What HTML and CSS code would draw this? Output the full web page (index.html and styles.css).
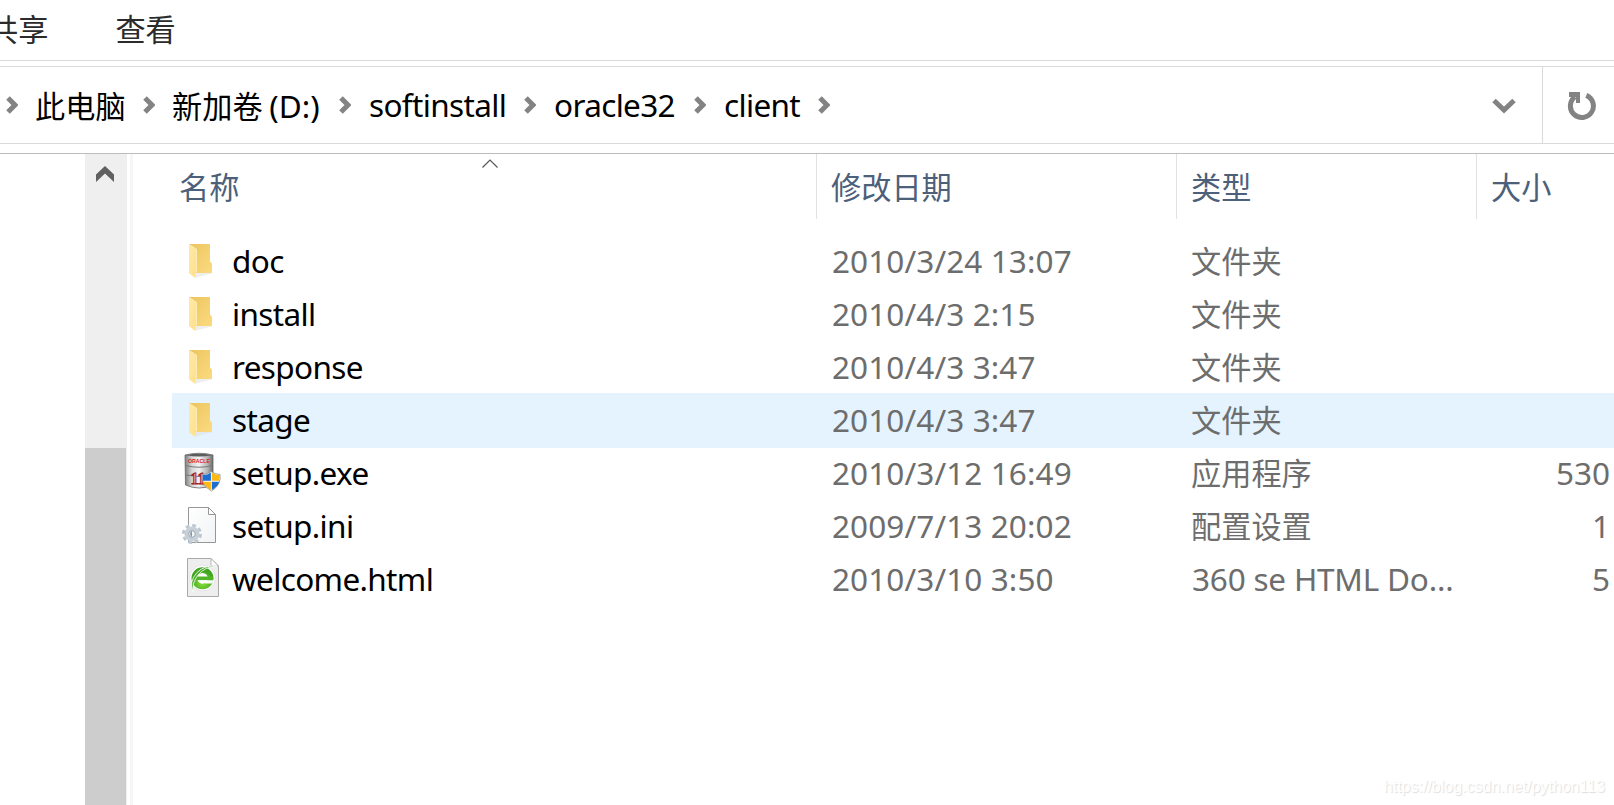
FILE: index.html
```html
<!DOCTYPE html>
<html lang="zh-CN">
  <head>
    <meta charset="UTF-8" />
    <meta name="viewport" content="width=device-width, initial-scale=1.0" />
    <title>client</title>
    <link rel="stylesheet" href="styles.css">
  </head>
  <body>
    <svg class="defs" width="0" height="0">
      <defs>
        <linearGradient id="folderBack" x1="0" y1="0" x2="1" y2="1">
          <stop offset="0" stop-color="#ecc45e" />
          <stop offset="1" stop-color="#fbdb80" />
        </linearGradient>
        <linearGradient id="folderFront" x1="0" y1="0" x2="1" y2="1">
          <stop offset="0" stop-color="#ffe9a6" />
          <stop offset="1" stop-color="#fee08b" />
        </linearGradient>
        <linearGradient id="metal" x1="0" y1="0" x2="1" y2="0">
          <stop offset="0" stop-color="#7d7d7d" />
          <stop offset="0.25" stop-color="#d6d6d6" />
          <stop offset="0.5" stop-color="#f2f2f2" />
          <stop offset="0.8" stop-color="#b4b4b4" />
          <stop offset="1" stop-color="#6a6a6a" />
        </linearGradient>
        <linearGradient id="paper" x1="0" y1="0" x2="1" y2="1">
          <stop offset="0" stop-color="#ffffff" />
          <stop offset="1" stop-color="#f1f3f5" />
        </linearGradient>
        <radialGradient id="green" cx="0.5" cy="0.75" r="0.7">
          <stop offset="0" stop-color="#8be23a" />
          <stop offset="1" stop-color="#3fa522" />
        </radialGradient>
      </defs>
      <symbol id="chevron" viewBox="0 0 12 18">
        <path d="M2 2 L9 9 L2 16" fill="none" stroke="#838383" stroke-width="5" />
      </symbol>
      <symbol id="folder" viewBox="0 0 44 53">
        <path d="M16 42.5 L33 38 H16z" fill="#ddd" opacity="0.5" />
        <path d="M9 9 H30 V26.5 L32 28.8 V38 H14z" fill="url(#folderBack)" />
        <path d="M9 9.2 L16.8 14.5 V37 L15.7 38.5 V43.2 L9 38.3z" fill="url(#folderFront)" />
        <path d="M9.5 9.5 L16.5 14.3 V37" fill="none" stroke="#fff0c0" stroke-width="0.8" />
      </symbol>
    </svg>

    <div class="tabs">
      <span class="tab tab-share">共享</span>
      <span class="tab">查看</span>
    </div>

    <div class="address">
      <div class="crumbs">
        <svg class="sep"><use href="#chevron" /></svg>
        <span class="zh">此电脑</span>
        <svg class="sep"><use href="#chevron" /></svg>
        <span class="zh">新加卷 <span class="drive">(D:)</span></span>
        <svg class="sep"><use href="#chevron" /></svg>
        <span class="name">softinstall</span>
        <svg class="sep"><use href="#chevron" /></svg>
        <span class="name">oracle32</span>
        <svg class="sep"><use href="#chevron" /></svg>
        <span class="name">client</span>
        <svg class="sep"><use href="#chevron" /></svg>
      </div>
      <svg class="dropdown" width="24" height="16" viewBox="0 0 24 16">
        <path d="M2 2.5 L12 12 L22 2.5" fill="none" stroke="#838383" stroke-width="5" />
      </svg>
      <div class="refresh">
        <svg width="30" height="30" viewBox="0 0 30 30">
          <path d="M19.3 4.4 A11.5 11.5 0 1 1 8 5.8" fill="none" stroke="#838383" stroke-width="5" />
          <path d="M2 1 H13 V12 H9 V6 H2z" fill="#838383" />
        </svg>
      </div>
    </div>

    <div class="main">
      <div class="tree"></div>
      <div class="scrollbar">
        <svg width="18" height="16" viewBox="0 0 18 16">
          <path d="M9 0 L18 8.5 V16 L9 7.5 L0 16 V8.5z" fill="#606060" />
        </svg>
        <div class="thumb"></div>
      </div>
      <div class="splitter"></div>
      <div class="files">
        <div class="header">
          <div class="col col-name">
            名称
            <svg class="sort" width="16" height="9" viewBox="0 0 16 9">
              <path d="M0.5 8.5 L8 1 L15.5 8.5" fill="none" stroke="#555" stroke-width="1.2" />
            </svg>
          </div>
          <div class="col">修改日期</div>
          <div class="col">类型</div>
          <div class="col">大小</div>
        </div>
        <div class="rows">
          <div class="row">
            <svg class="icon"><use href="#folder" /></svg>
            <span class="name">doc</span>
            <span class="date">2010/3/24 13:07</span>
            <span class="type">文件夹</span>
            <span class="size"></span>
          </div>
          <div class="row">
            <svg class="icon"><use href="#folder" /></svg>
            <span class="name">install</span>
            <span class="date">2010/4/3 2:15</span>
            <span class="type">文件夹</span>
            <span class="size"></span>
          </div>
          <div class="row">
            <svg class="icon"><use href="#folder" /></svg>
            <span class="name">response</span>
            <span class="date">2010/4/3 3:47</span>
            <span class="type">文件夹</span>
            <span class="size"></span>
          </div>
          <div class="row active">
            <svg class="icon"><use href="#folder" /></svg>
            <span class="name">stage</span>
            <span class="date">2010/4/3 3:47</span>
            <span class="type">文件夹</span>
            <span class="size"></span>
          </div>
          <div class="row">
            <svg class="icon" viewBox="0 0 44 53">
              <path d="M5 8 Q19 4.5 33 8 V38 Q19 44 5.5 38z" fill="url(#metal)" stroke="#666" stroke-width="0.8" />
              <path d="M6 8.2 Q19 5.5 32 8.2 Q19 11 6 8.2z" fill="#5c5c5c" />
              <path d="M5.5 18.5 Q19 22 32.5 18.5 M5.5 28 Q19 31 32.5 28" fill="none" stroke="#777" />
              <text x="8" y="15.8" textLength="22" lengthAdjust="spacingAndGlyphs" class="oracle">ORACLE</text>
              <text x="10.5" y="37" class="eleven">11</text>
              <path d="M22 27.5 Q28 27 31 24.5 Q35 27.5 40 27.5 Q41.5 38 31.5 44 Q21 38 22 27.5z" fill="#fff" stroke="#888" stroke-width="0.8" />
              <path d="M22.6 28.1 Q27.5 28 30.9 25.5 V33.8 H22.8z" fill="#1c6fd2" />
              <path d="M31.8 25.5 Q35.5 28.1 39.7 28.1 L39.4 33.8 H31.8z" fill="#fdb813" />
              <path d="M23 34.7 H30.9 V43 Q24.8 39.5 23 34.7z" fill="#fdb813" />
              <path d="M31.8 34.7 H39.2 Q38 39.5 31.8 43z" fill="#1c6fd2" />
            </svg>
            <span class="name">setup.exe</span>
            <span class="date">2010/3/12 16:49</span>
            <span class="type">应用程序</span>
            <span class="size">530</span>
          </div>
          <div class="row">
            <svg class="icon" viewBox="0 0 44 53">
              <path d="M8.5 7.5 H28.5 L35.5 14.5 V42.5 H8.5z" fill="url(#paper)" stroke="#979797" />
              <path d="M28.5 7.5 V14.5 H35.5z" fill="#fff" stroke="#979797" />
              <circle cx="12" cy="34" r="8.3" fill="none" stroke="#bcc7d0" stroke-width="3.4" stroke-dasharray="3.6 2.92" />
              <circle cx="12" cy="34" r="5.3" fill="none" stroke="#c7d0d8" stroke-width="4.5" />
              <circle cx="12" cy="34" r="3.3" fill="#f4f6f8" stroke="#95a0aa" stroke-width="0.9" />
              <path d="M12 30.8 Q8 34 12 37.2z" fill="#8d98a2" />
            </svg>
            <span class="name">setup.ini</span>
            <span class="date">2009/7/13 20:02</span>
            <span class="type">配置设置</span>
            <span class="size">1</span>
          </div>
          <div class="row">
            <svg class="icon" viewBox="0 0 44 53">
              <path d="M7.5 5.5 H31 L38.5 13 V43.5 H7.5z" fill="#eeeeee" stroke="#a9a9a9" />
              <path d="M31 5.5 V13 H38.5z" fill="#fff" stroke="#b5b5b5" />
              <circle cx="22.5" cy="25" r="13" fill="#fbfbfb" stroke="#dcdcdc" stroke-width="0.7" />
              <circle cx="22.5" cy="25.3" r="8.2" fill="#fff" stroke="url(#green)" stroke-width="5.6" />
              <path d="M16 25.3 H33" stroke="#50b529" stroke-width="3.6" />
              <path d="M25.5 27.3 H34 L32 30.5 H25z" fill="#fbfbfb" />
              <path d="M13 39 Q8.5 29 17 19.5 Q25 11.500 37 13.2 Q25 13.5 18 22 Q12 29.5 13 39z" fill="#4caf2b" stroke="#fff" stroke-width="0.8" />
            </svg>
            <span class="name">welcome.html</span>
            <span class="date">2010/3/10 3:50</span>
            <span class="type latin">360 se HTML Do...</span>
            <span class="size">5</span>
          </div>
        </div>
      </div>
    </div>
    <div class="watermark">https://blog.csdn.net/python113</div>
  </body>
</html>
```
FILE: styles.css
```css
* {
  box-sizing: border-box;
}
body {
  margin: 0;
  height: 805px;
  overflow: hidden;
  display: flex;
  flex-direction: column;
  background: #fff;
  color: #000;
  font-family: "Noto Sans", "Noto Sans CJK SC", sans-serif;
  font-size: 31.5px;
  white-space: nowrap;
}
svg {
  display: block;
}
.defs {
  position: absolute;
}
.zh,
.tab,
.col,
.type {
  font-family: "Noto Sans CJK SC", sans-serif;
  font-size: 30.2px;
}
.name {
  letter-spacing: -0.65px;
}
.drive {
  font-family: "Noto Sans", sans-serif;
  font-size: 31.5px;
}

/* ribbon tabs */
.tabs {
  flex: none;
  display: flex;
  gap: 67px;
  height: 61px;
  border-bottom: 1px solid #dadada;
  color: #2b2b2b;
  line-height: 56px;
}
.tab-share {
  margin-left: -12px;
}

/* address bar */
.address {
  flex: none;
  display: flex;
  align-items: center;
  height: 78px;
  margin-top: 5px;
  border-top: 1px solid #dadada;
  border-bottom: 1px solid #dadada;
}
.crumbs {
  flex: 1;
  display: grid;
  grid-template-columns: 29px 108px 29px 167px 30px 155px 30px 140px 30px 94px 31px;
  align-items: center;
  height: 76px;
  padding-left: 6px;
  line-height: 74px;
}
.crumbs .zh {
  line-height: 72px;
}
.sep {
  width: 12px;
  height: 18px;
  margin-bottom: 1px;
}
.dropdown {
  margin: 2px 26px 0 0;
}
.refresh {
  width: 72px;
  height: 76px;
  padding: 24px 0 0 24px;
  border-left: 1px solid #dadada;
}

.main {
  flex: 1;
  display: flex;
  min-height: 0;
  margin-top: 9px;
  border-top: 1px solid #bcbcbc;
}
.tree {
  width: 85px;
}
.scrollbar {
  display: flex;
  flex-direction: column;
  width: 42px;
  padding-top: 12px;
  background: #efefef;
}
.scrollbar svg {
  flex: none;
  margin-left: 11px;
}
.thumb {
  flex: 1;
  width: 41px;
  margin-top: 266px;
  background: #cdcdcd;
}
.splitter {
  width: 3px;
  margin: 0 39px 0 3px;
  background: #f6f6f6;
}

/* file list */
.files {
  flex: 1;
}
.header {
  display: grid;
  grid-template-columns: 645px 360px 300px 137px;
  height: 65px;
  color: #4c607a;
  line-height: 64px;
}
.col {
  padding-left: 14px;
  border-right: 1px solid #e2e2e2;
}
.col:last-child {
  border-right: none;
}
.col-name {
  position: relative;
  padding-left: 7px;
}
.sort {
  position: absolute;
  left: 310px;
  top: 5px;
}
.rows {
  padding-top: 16px;
}
.row {
  display: grid;
  grid-template-columns: 52px 600px 360px 300px 118px;
  height: 53px;
  padding-left: 8px;
  line-height: 52px;
}
.active {
  background: #e5f3ff;
  box-shadow: 0 1px #e5f3ff, 0 -1px #e5f3ff;
}
.icon {
  width: 44px;
  height: 53px;
}
.date,
.type,
.size {
  color: #6d6d6d;
}
.date {
  letter-spacing: 0.1px;
}
.type {
  margin-left: -1px;
  line-height: 50px;
}
.size {
  text-align: right;
}
.type.latin {
  margin-left: 0;
  font-family: "Noto Sans", sans-serif;
  font-size: 31.5px;
  line-height: 52px;
  letter-spacing: -0.2px;
}
.oracle {
  font: bold 6px "Liberation Sans", sans-serif;
  fill: #e0202a;
}
.eleven {
  font: bold 16px "Liberation Serif", serif;
  fill: #ff9a96;
  stroke: #9c1a1e;
  stroke-width: 0.9px;
}

.watermark {
  position: absolute;
  right: 9px;
  bottom: 9px;
  font: 16px "Liberation Sans", sans-serif;
  color: #fff;
  text-shadow: 1px 1px 1px #ddd;
}
```
